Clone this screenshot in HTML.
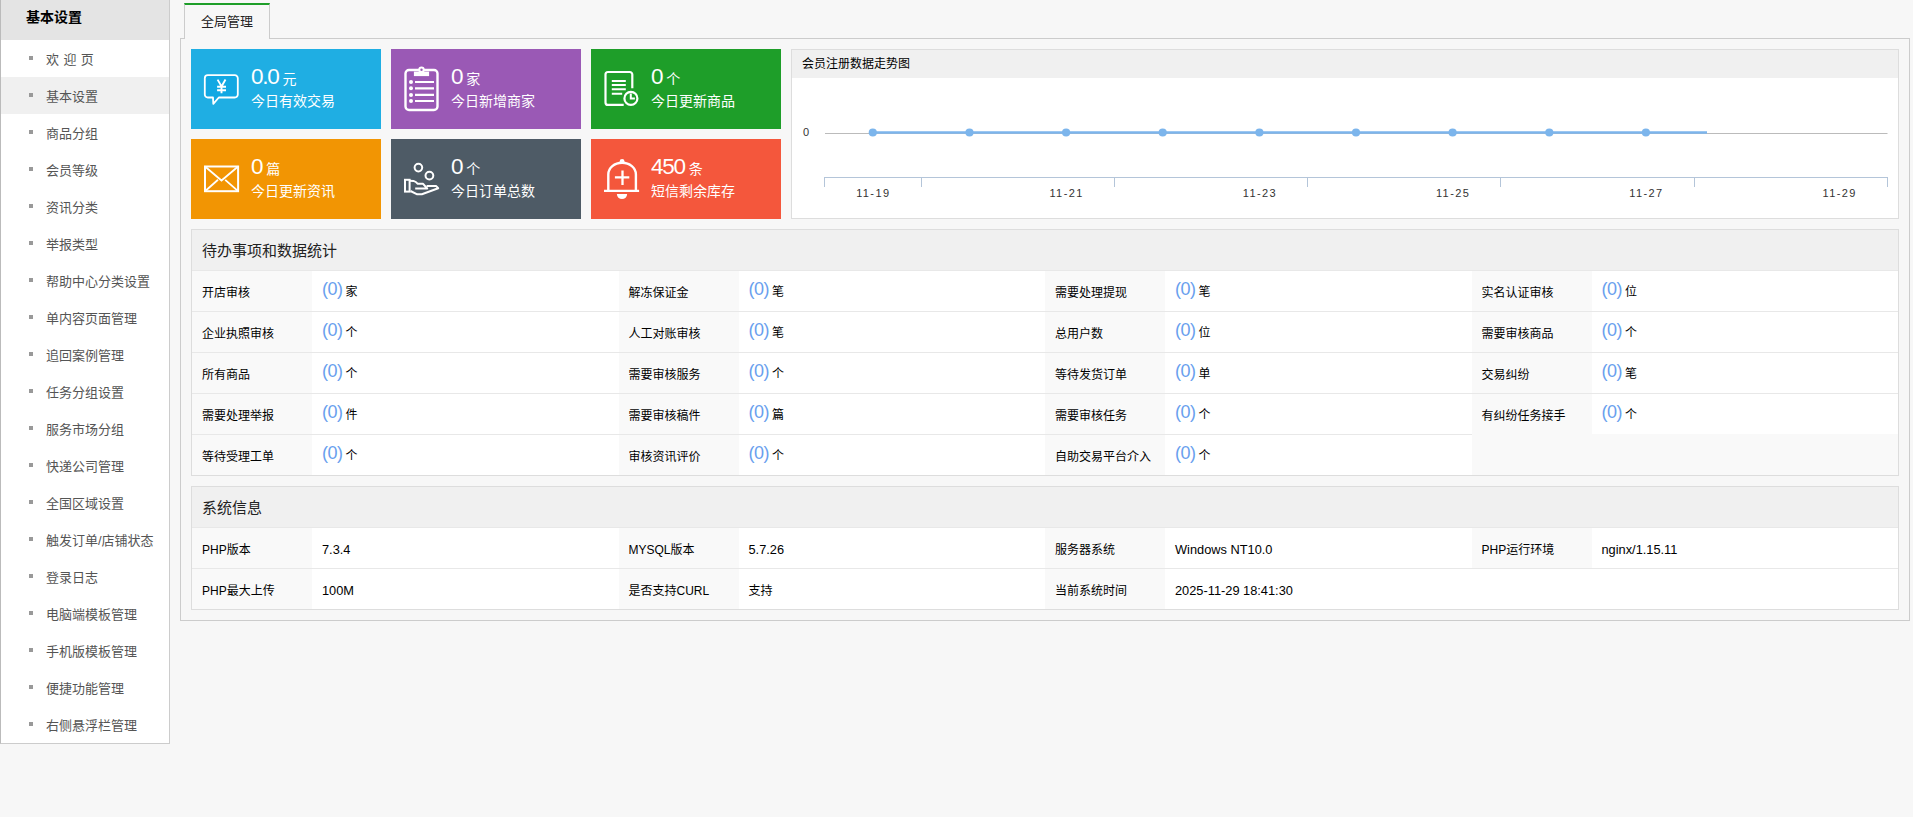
<!DOCTYPE html>
<html lang="zh-CN">
<head>
<meta charset="utf-8">
<title>全局管理</title>
<style>
*{box-sizing:border-box;margin:0;padding:0}
html,body{width:1913px;height:817px;overflow:hidden;background:#f7f7f7}
body{font-family:"Liberation Sans","Noto Sans CJK SC",sans-serif;font-size:12px;color:#222;position:relative}
ul{list-style:none}
/* sidebar */
#side{position:absolute;left:0;top:0;width:170px;height:744px;background:#fff;border-left:1px solid #bbb;border-right:1px solid #ccc;border-bottom:1px solid #ccc}
#side h3{height:40px;background:#e4e4e4;font-size:14px;font-weight:bold;color:#000;line-height:34px;padding-left:25px}
#side li{height:37px;line-height:39px;font-size:13px;color:#555;padding-left:45px;position:relative}
#side li:before{content:"";position:absolute;left:28px;top:16px;width:4px;height:4px;background:#999}
#side li.on{background:#f0f0f0}
/* tab */
#tab{position:absolute;left:184px;top:3px;width:86px;height:36px;border:1px solid #ccc;border-top:2px solid #1e9e29;border-bottom:none;background:#f7f7f7;font-size:13px;color:#222;text-align:center;line-height:33px;z-index:2}
#main{position:absolute;left:180px;top:38px;width:1730px;height:583px;border:1px solid #ccc;background:#f7f7f7}
/* cards */
.card{position:absolute;width:190px;height:80px;color:#fff}
.card svg{position:absolute;left:0;top:0;width:190px;height:80px}
.card .n{position:absolute;left:60px;top:16px;font-size:22.500px;line-height:24px;letter-spacing:-1.300px;white-space:nowrap}
.card .n i{font-style:normal;font-size:14px;margin-left:4px;letter-spacing:0}
.card .t{position:absolute;left:60px;top:42px;font-size:14px;line-height:20px;white-space:nowrap}
/* panel */
.panel{position:absolute;border:1px solid #ddd;background:#fff}
.panel h4{background:#f0f0f0;font-weight:normal;color:#222}
table{border-collapse:separate;border-spacing:0;table-layout:fixed;width:100%}
td{height:41px;border-top:1px solid #e8e8e8;font-size:12px;color:#000;padding:4px 0 0 10px;vertical-align:middle;white-space:nowrap;line-height:20px}
td.l{background:#f9f9f9;width:120px}
td b{font-weight:normal;color:#6a9fee;font-size:18px;letter-spacing:-.5px;margin-right:3px;position:relative;top:-3px}
td b+span{position:relative;top:-2px}
td.e{padding-top:3px;font-size:12.8px}
</style>
</head>
<body>
<div id="side">
<h3>基本设置</h3>
<ul>
<li style="word-spacing:.8px">欢 迎 页</li>
<li class="on">基本设置</li>
<li>商品分组</li>
<li>会员等级</li>
<li>资讯分类</li>
<li>举报类型</li>
<li>帮助中心分类设置</li>
<li>单内容页面管理</li>
<li>追回案例管理</li>
<li>任务分组设置</li>
<li>服务市场分组</li>
<li>快递公司管理</li>
<li>全国区域设置</li>
<li>触发订单/店铺状态</li>
<li>登录日志</li>
<li>电脑端模板管理</li>
<li>手机版模板管理</li>
<li>便捷功能管理</li>
<li>右侧悬浮栏管理</li>
</ul>
</div>

<div id="tab">全局管理</div>
<div id="main"></div>

<!-- cards -->
<div class="card" style="left:191px;top:49px;background:#1faee3">
<svg viewBox="0 0 190 80" fill="none" stroke="#fff" stroke-width="1.8" stroke-linejoin="round" stroke-linecap="round"><path d="M16.800 26.200H43.800a3 3 0 0 1 3 3V45.500a3 3 0 0 1-3 3H27.800L22.300 54.900L22 48.500H16.800a3 3 0 0 1-3-3V29.200a3 3 0 0 1 3-3z" fill="#12a8e3"/><path d="M26.600 30.600L30.500 37.400L34.500 30.600M30.500 37.400V44.300M26.100 37.700H35M26.100 41.300H35" stroke-width="1.9" stroke-linecap="butt"/></svg>
<div class="n">0.0<i>元</i></div><div class="t">今日有效交易</div>
</div>
<div class="card" style="left:391px;top:49px;background:#9a59b5">
<svg viewBox="0 0 190 80" fill="none" stroke="#fff" stroke-width="2.400"><rect x="14.500" y="21" width="32" height="40" rx="3.500"/><circle cx="30.500" cy="20.800" r="2.200" stroke-width="2" fill="#9a59b5"/><rect x="22.900" y="22.600" width="15.200" height="4.500" fill="#fff" stroke="none"/><g fill="#fff" stroke="none"><circle cx="20" cy="33" r="2"/><circle cx="20" cy="39.300" r="2"/><circle cx="20" cy="45.900" r="2"/><circle cx="20" cy="52" r="2"/></g><path d="M24 33H43M24 39.300H43M24 45.900H43M24 52H43" stroke-width="2.200"/></svg>
<div class="n">0<i>家</i></div><div class="t">今日新增商家</div>
</div>
<div class="card" style="left:591px;top:49px;background:#1e9e29">
<svg viewBox="0 0 190 80" fill="none" stroke="#fff" stroke-width="2.200"><path d="M32.700 55.900H17a2.500 2.500 0 0 1-2.500-2.500V25.500a2.500 2.500 0 0 1 2.500-2.500H38.800a2.500 2.500 0 0 1 2.500 2.500V39.200"/><path d="M20.800 31.900H34.800M20.800 36H34.800M20.800 40.300H34.800M20.800 44.800H31.200" stroke-width="2"/><circle cx="39.900" cy="49.400" r="6.500"/><path d="M39.800 44.600V49.500H43.900" stroke-width="2"/></svg>
<div class="n">0<i>个</i></div><div class="t">今日更新商品</div>
</div>
<div class="card" style="left:191px;top:139px;background:#f29503">
<svg viewBox="0 0 190 80" fill="none" stroke="#fff" stroke-width="2"><rect x="14" y="27.500" width="33.100" height="24.700"/><path d="M14 27.500L30.500 41.500L47.100 27.500M14 52.200L27 40.800M47.100 52.200L34.200 40.800" stroke-width="1.800"/></svg>
<div class="n">0<i>篇</i></div><div class="t">今日更新资讯</div>
</div>
<div class="card" style="left:391px;top:139px;background:#4e5b66">
<svg viewBox="0 0 190 80" fill="none" stroke="#fff" stroke-width="2" stroke-linejoin="round"><circle cx="27.400" cy="28.600" r="3.800"/><circle cx="38.400" cy="36.600" r="3.900"/><rect x="14" y="40.800" width="4.600" height="11.800" stroke-linejoin="miter"/><path d="M18.600 41.700L22.500 41.900Q25 42.500 26.800 44.800L32.100 44.800L36.200 49.500L24.200 49.500"/><path d="M35.600 46.900L45 46.900L47.200 49.300L30.900 55.300L26.200 55.300L19.500 52"/></svg>
<div class="n">0<i>个</i></div><div class="t">今日订单总数</div>
</div>
<div class="card" style="left:591px;top:139px;background:#f4573c">
<svg viewBox="0 0 190 80" fill="none" stroke="#fff" stroke-width="2.400"><path d="M13 51.800H48.100" stroke-width="2.200"/><path d="M17.300 51.800V35.400A13.800 11.700 0 0 1 44.900 35.400V51.800"/><circle cx="31.100" cy="22.400" r="2.400" fill="#fff" stroke="none"/><path d="M23.900 38.400H38.300M31.500 31.600V46" stroke-width="2.300"/><path d="M25.900 55.100H36.100A5.100 5 0 0 1 25.900 55.100z" fill="#fff" stroke="none"/></svg>
<div class="n">450<i>条</i></div><div class="t">短信剩余库存</div>
</div>

<!-- chart -->
<div class="panel" style="left:791px;top:49px;width:1108px;height:170px">
<h4 style="height:28px;line-height:29px;padding-left:10px;font-size:12px;color:#000">会员注册数据走势图</h4>
<svg width="1106" height="140" style="position:absolute;left:0;top:28px" font-family="Liberation Sans, sans-serif" font-size="11" fill="#333">
<text x="11" y="58.400">0</text>
<path d="M33 55.500H1095.500" stroke="#bbb" stroke-width="1" fill="none"/>
<path d="M80.8 54.500H915" stroke="#7cb5ec" stroke-width="2.400" fill="none"/>
<g fill="#7cb5ec"><circle cx="80.8" cy="54.500" r="4.100"/><circle cx="177.5" cy="54.500" r="4.100"/><circle cx="274.1" cy="54.500" r="4.100"/><circle cx="370.7" cy="54.500" r="4.100"/><circle cx="467.4" cy="54.500" r="4.100"/><circle cx="564.0" cy="54.500" r="4.100"/><circle cx="660.6" cy="54.500" r="4.100"/><circle cx="757.3" cy="54.500" r="4.100"/><circle cx="853.9" cy="54.500" r="4.100"/></g>
<path d="M32 99.500H1096M32.5 99V109M129.5 99V109M322.5 99V109M515.5 99V109M708.5 99V109M902.5 99V109M1095.5 99V109" stroke="#b4c5d9" stroke-width="1" fill="none"/>
<g text-anchor="middle" letter-spacing="1.4"><text x="81.3" y="119">11-19</text><text x="274.6" y="119">11-21</text><text x="467.9" y="119">11-23</text><text x="661.1" y="119">11-25</text><text x="854.4" y="119">11-27</text><text x="1047.7" y="119">11-29</text></g>
</svg>
</div>

<!-- todo -->
<div class="panel" style="left:191px;top:229px;width:1708px;height:247px">
<h4 style="height:40px;line-height:42px;padding-left:10px;font-size:15px">待办事项和数据统计</h4>
<table>
<tr><td class="l">开店审核</td><td><b>(0)</b><span>家</span></td><td class="l">解冻保证金</td><td><b>(0)</b><span>笔</span></td><td class="l">需要处理提现</td><td><b>(0)</b><span>笔</span></td><td class="l">实名认证审核</td><td><b>(0)</b><span>位</span></td></tr>
<tr><td class="l">企业执照审核</td><td><b>(0)</b><span>个</span></td><td class="l">人工对账审核</td><td><b>(0)</b><span>笔</span></td><td class="l">总用户数</td><td><b>(0)</b><span>位</span></td><td class="l">需要审核商品</td><td><b>(0)</b><span>个</span></td></tr>
<tr><td class="l">所有商品</td><td><b>(0)</b><span>个</span></td><td class="l">需要审核服务</td><td><b>(0)</b><span>个</span></td><td class="l">等待发货订单</td><td><b>(0)</b><span>单</span></td><td class="l">交易纠纷</td><td><b>(0)</b><span>笔</span></td></tr>
<tr><td class="l">需要处理举报</td><td><b>(0)</b><span>件</span></td><td class="l">需要审核稿件</td><td><b>(0)</b><span>篇</span></td><td class="l">需要审核任务</td><td><b>(0)</b><span>个</span></td><td class="l">有纠纷任务接手</td><td><b>(0)</b><span>个</span></td></tr>
<tr><td class="l">等待受理工单</td><td><b>(0)</b><span>个</span></td><td class="l">审核资讯评价</td><td><b>(0)</b><span>个</span></td><td class="l">自助交易平台介入</td><td><b>(0)</b><span>个</span></td><td class="l" colspan="2" style="border-top:none"></td></tr>
</table>
</div>

<!-- sysinfo -->
<div class="panel" style="left:191px;top:486px;width:1708px;height:124px">
<h4 style="height:40px;line-height:42px;padding-left:10px;font-size:15px">系统信息</h4>
<table>
<tr><td class="l">PHP版本</td><td class="e">7.3.4</td><td class="l">MYSQL版本</td><td class="e">5.7.26</td><td class="l">服务器系统</td><td class="e">Windows NT10.0</td><td class="l">PHP运行环境</td><td class="e">nginx/1.15.11</td></tr>
<tr><td class="l">PHP最大上传</td><td class="e">100M</td><td class="l">是否支持CURL</td><td>支持</td><td class="l">当前系统时间</td><td class="e">2025-11-29 18:41:30</td><td colspan="2"></td></tr>
</table>
</div>
</body>
</html>
